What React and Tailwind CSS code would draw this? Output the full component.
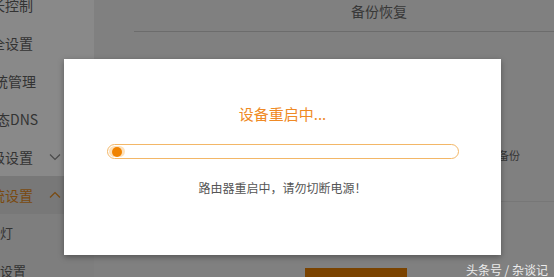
import React from "react"

const font = { fontFamily: '"Noto Sans CJK SC", "Noto Sans", sans-serif' }

const menu = [
  { label: "家长控制", shift: "-ml-[23px]" },
  { label: "安全设置", shift: "-ml-[23px]" },
  { label: "系统管理", shift: "-ml-[20px]" },
  { label: "动态DNS", shift: "-ml-[18px]" },
  { label: "高级设置", shift: "-ml-[23px]", chevron: "down" },
  { label: "系统设置", shift: "-ml-[23px]", chevron: "up", active: true },
]

const sub = [
  { label: "指示灯", shift: "-ml-[26px]" },
  { label: "时间设置", shift: "-ml-[26px]" },
]

function Chevron({ dir, color }) {
  return (
    <svg width="12" height="8" viewBox="0 0 12 8" className="ml-auto mr-[33px]">
      <path
        d={dir === "down" ? "M1 1.5 L6 6.5 L11 1.5" : "M1 6.5 L6 1.5 L11 6.5"}
        fill="none"
        stroke={color}
        strokeWidth="1.2"
      />
    </svg>
  )
}

function Sidebar() {
  return (
    <div className="w-[94px] shrink-0 bg-[#898989] overflow-hidden flex flex-col -mt-[14px]">
      {menu.map((m) => (
        <div
          key={m.label}
          className={`h-[38px] flex items-center shrink-0 ${
            m.active ? "bg-[#787878] text-[#7a4a10]" : "text-[#333]"
          }`}
        >
          <span className={`text-[14px] whitespace-nowrap ${m.shift}`}>{m.label}</span>
          {m.chevron && (
            <Chevron dir={m.chevron} color={m.active ? "#7a4a10" : "#4a4a4a"} />
          )}
        </div>
      ))}
      <div className="bg-[#7e7e7e] flex-1">
        {sub.map((s) => (
          <div key={s.label} className="h-[38px] flex items-center text-[#333]">
            <span className={`text-[13px] whitespace-nowrap ${s.shift}`}>{s.label}</span>
          </div>
        ))}
      </div>
    </div>
  )
}

function Main() {
  return (
    <div className="flex-1 bg-[#808080] flex flex-col">
      <div className="h-[32px] border-b border-[#6c6c6c] ml-[40px] text-[14px] text-[#383838] pl-[217px] pt-[1px]">
        备份恢复
      </div>
      <div className="ml-[40px] h-[170px] border-b border-[#777] flex items-end pb-[38px] justify-end pr-[34px] text-[11px] text-[#363636]">
        备份
      </div>
      <div className="flex-1 relative">
        <div className="absolute left-[211px] top-[66px] w-[102px] h-[10px] bg-[#7a4300]" />
        <div className="absolute right-[6px] top-[59px] text-[12px] text-[#ececec]">
          头条号 / 杂谈记
        </div>
      </div>
    </div>
  )
}

function RebootModal() {
  return (
    <div className="absolute left-[64px] top-[59px] w-[437px] h-[196px] bg-white shadow-[0_2px_6px_rgba(0,0,0,0.35)] flex flex-col items-center">
      <div className="mt-[45px] text-[15px] text-[#ef8a25] leading-[20px]">设备重启中...</div>
      <div className="mt-[20px] w-[352px] h-[15px] rounded-full border border-[#f3b767] flex items-center pl-[1px]">
        <div className="w-[16px] h-[11px] rounded-full bg-[#fde1bb] flex items-center justify-center">
          <div className="w-[10px] h-[10px] rounded-full bg-[#f08300]" />
        </div>
      </div>
      <div className="mt-[21px] text-[12px] text-[#555] leading-[16px]">
        路由器重启中，请勿切断电源！
      </div>
    </div>
  )
}

export default function App() {
  return (
    <div className="relative w-[554px] h-[277px] overflow-hidden flex" style={font}>
      <Sidebar />
      <Main />
      <RebootModal />
    </div>
  )
}
